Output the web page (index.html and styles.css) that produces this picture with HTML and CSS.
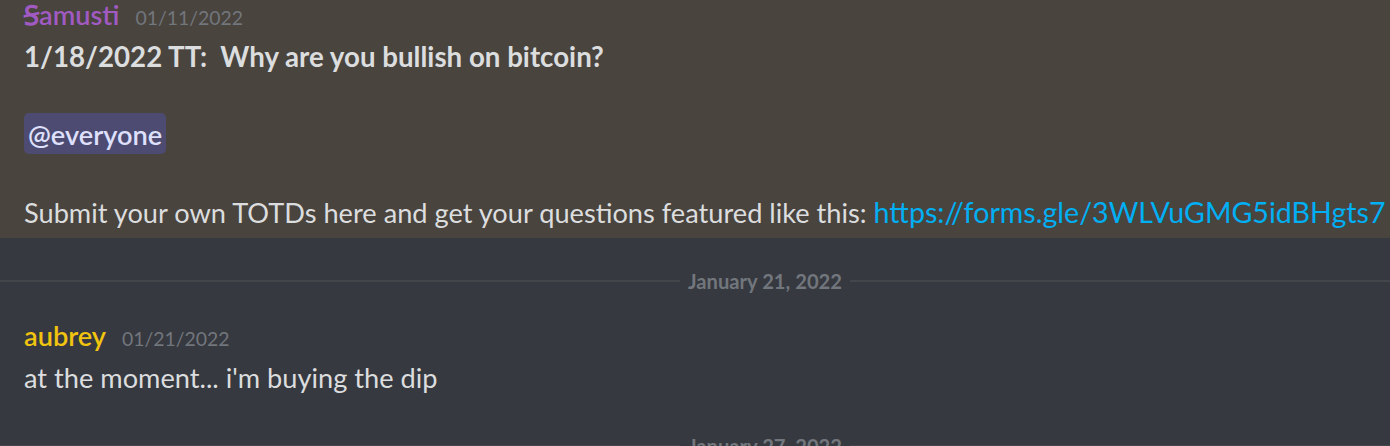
FILE: index.html
```html
<!DOCTYPE html>
<html lang="en">
<head>
    <meta charset="UTF-8">
    <title>Discord channel</title>
    <link rel="stylesheet" href="styles.css">
</head>
<body>
    <div class="chat">
        <!-- highlighted announcement -->
        <div class="message mentioned">
            <div class="header">
                <span class="author purple">Ꞩamusti</span>
                <span class="timestamp">01/11/2022</span>
            </div>
            <div class="content">
                <strong class="title">1/18/2022 TT:&nbsp; Why are you bullish on bitcoin?</strong>
                <div class="blank"></div>
                <span class="mention">@everyone</span>
                <div class="blank"></div>
                <div class="nowrap">Submit your own TOTDs here and get your questions featured like this: <a class="link" href="#">https://forms.gle/3WLVuGMG5idBHgts7</a></div>
            </div>
        </div>

        <div class="divider"><span>January 21, 2022</span></div>

        <div class="message last">
            <div class="header">
                <span class="author yellow">aubrey</span>
                <span class="timestamp">01/21/2022</span>
            </div>
            <div class="content">at the moment... i'm buying the dip</div>
        </div>

        <div class="divider"><span>January 27, 2022</span></div>
    </div>
</body>
</html>
```
FILE: styles.css
```css
* {
    margin: 0;
    padding: 0;
    box-sizing: border-box;
}

body {
    background-color: #36393f;
    font-family: "Lato", "Open Sans", sans-serif;
    font-size: 27.2px;
    color: #dcddde;
    overflow: hidden;
    height: 446px;
}

.chat {
    display: flex;
    flex-direction: column;
    margin-top: -5px;
}

.message {
    padding: 0 0 4px 24px;
    line-height: 39px;
}

.mentioned {
    background-color: #49443e;
    padding-bottom: 6px;
}

.last {
    padding-bottom: 6px;
}

.header {
    display: flex;
    align-items: baseline;
}

.author {
    font-weight: 600;
}

.purple {
    color: #a05ac2;
}

.yellow {
    color: #f1c40f;
}

.timestamp {
    margin-left: 16px;
    font-size: 19.4px;
    color: #72767d;
}

.title {
    display: block;
    font-size: 27.7px;
    font-weight: 700;
}

.blank {
    height: 39px;
}

.mention {
    background-color: #4d4b72;
    color: #dee0fc;
    font-weight: 600;
    padding: 5px 4px 3px;
    border-radius: 5px;
}

.nowrap {
    white-space: nowrap;
}

.link {
    color: #00aff4;
    text-decoration: none;
    font-size: 28.6px;
}

.divider {
    display: grid;
    grid-template-columns: 680px auto 1fr;
    grid-template-rows: 2px;
    align-items: center;
    margin-top: 42px;
    height: 2px;
    margin-bottom: 34px;
}

.divider::before,
.divider::after {
    content: "";
    height: 2px;
    background-color: #43464b;
}

.divider::before {
    grid-column: 1;
}

.divider span {
    padding: 0 8px;
    font-size: 20.2px;
    font-weight: 700;
    color: #72767d;
    line-height: 26px;
}
```
